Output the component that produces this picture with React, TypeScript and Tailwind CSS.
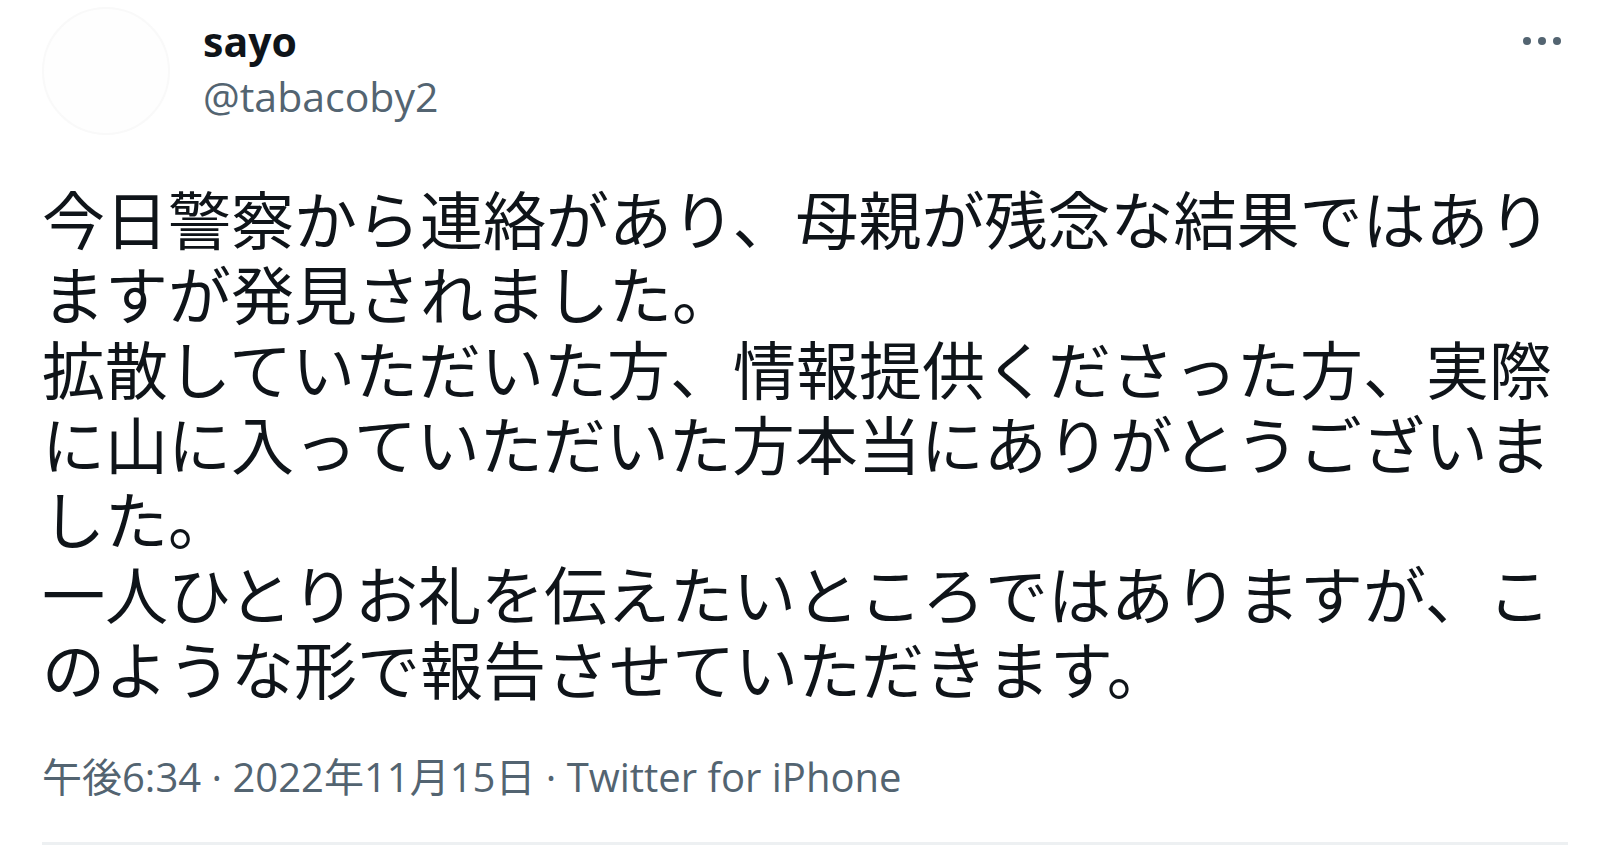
import React from 'react'

const lines = [
  '今日警察から連絡があり、母親が残念な結果ではあり',
  'ますが発見されました。',
  '拡散していただいた方、情報提供くださった方、実際',
  'に山に入っていただいた方本当にありがとうございま',
  'した。',
  '一人ひとりお礼を伝えたいところではありますが、こ',
  'のような形で報告させていただきます。'
]

const latin = { fontFamily: '"Open Sans", "Noto Sans CJK JP", sans-serif' }
const jp = { fontFamily: '"Noto Sans CJK JP", "Noto Sans", sans-serif' }

function MoreDots() {
  return (
    <div className="flex items-center gap-[7px] mt-[30px] mr-[7px]">
      <span className="size-[8px] rounded-full bg-[#536471]" />
      <span className="size-[8px] rounded-full bg-[#536471]" />
      <span className="size-[8px] rounded-full bg-[#536471]" />
    </div>
  )
}

export default function App() {
  return (
    <div className="w-[1600px] h-[850px] bg-white overflow-hidden">
      <article className="flex flex-col pl-[42px] pr-[32px] pt-[7px]">
        <header className="flex items-start">
          <div className="size-[128px] min-w-[128px] rounded-full bg-[#fefefe] border-2 border-[#f9f9f9]" />
          <div className="flex flex-col ml-[33px] mt-[7px] grow" style={latin}>
            <span className="text-[41px] leading-[55px] font-bold text-[#0f1419]">
              sayo
            </span>
            <span className="text-[41px] leading-[55px] text-[#536471]">
              @tabacoby2
            </span>
          </div>
          <MoreDots />
        </header>

        <p
          className="mt-[44px] text-[63px] leading-[75px] text-[#0f1419]"
          style={jp}
        >
          {lines.map((l, i) => (
            <React.Fragment key={i}>
              {l}
              {i < lines.length - 1 && <br />}
            </React.Fragment>
          ))}
        </p>

        <div
          className="mt-[46px] text-[40px] leading-[54px] text-[#536471] whitespace-nowrap"
          style={latin}
        >
          午後6:34 · 2022年11月15日 · Twitter for iPhone
        </div>

        <div className="mt-[38px] h-[3px] bg-[#edf0f2]" />
      </article>
    </div>
  )
}
